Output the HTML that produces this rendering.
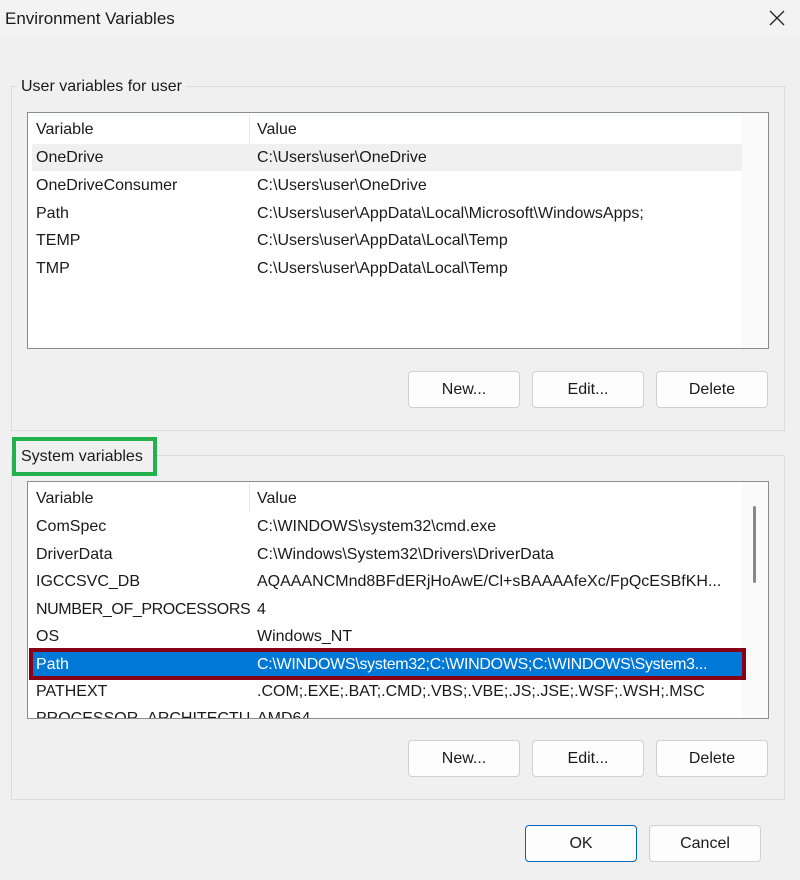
<!DOCTYPE html>
<html><head><style>
*{margin:0;padding:0;box-sizing:border-box}
body{width:800px;height:880px;background:#f0f0f0;font-family:"Liberation Sans",sans-serif;font-size:16px;color:#1a1a1a;position:relative;overflow:hidden}
.abs{position:absolute}
.title{left:0;top:0;width:800px;height:38px;background:#f3f3f3}
.grp{border:1px solid #dcdcdc}
.leg{background:#f0f0f0;padding:0 4px;line-height:20px}
.list{background:#fff;border:1px solid #888d94}
.t{position:absolute;white-space:nowrap;line-height:20px;margin-top:1px}
.btn{position:absolute;background:#fdfdfd;border:1px solid #d0d0d0;border-radius:4px;text-align:center;line-height:36px;height:37px;width:112px}
</style></head><body>
<div class="abs title"></div>
<div class="t" style="left:5px;top:8px;font-size:17px">Environment Variables</div>
<svg class="abs" style="left:768px;top:9px" width="18" height="18"><path d="M2 2L16 16M16 2L2 16" stroke="#222" stroke-width="1.3"/></svg>

<div class="abs grp" style="left:11px;top:86px;width:774px;height:345px"></div>
<div class="abs leg" style="left:17px;top:77px">User variables for user</div>
<div class="abs list" style="left:27px;top:112px;width:742px;height:237px"></div>
<div class="abs" style="left:742px;top:113px;width:26px;height:235px;background:#fafafa"></div>
<div class="abs" style="left:249px;top:115px;width:1px;height:28px;background:#e5e5e5"></div>
<div class="abs" style="left:32px;top:144px;width:710px;height:27px;background:#f0f0f0"></div>
<div class="t" style="left:36px;top:119px">Variable</div><div class="t" style="left:257px;top:119px">Value</div>
<div class="t" style="left:36px;top:147px">OneDrive</div><div class="t" style="left:257px;top:147px">C:\Users\user\OneDrive</div>
<div class="t" style="left:36px;top:175px">OneDriveConsumer</div><div class="t" style="left:257px;top:175px">C:\Users\user\OneDrive</div>
<div class="t" style="left:36px;top:203px">Path</div><div class="t" style="left:257px;top:203px">C:\Users\user\AppData\Local\Microsoft\WindowsApps;</div>
<div class="t" style="left:36px;top:230px">TEMP</div><div class="t" style="left:257px;top:230px">C:\Users\user\AppData\Local\Temp</div>
<div class="t" style="left:36px;top:258px">TMP</div><div class="t" style="left:257px;top:258px">C:\Users\user\AppData\Local\Temp</div>
<div class="btn" style="left:408px;top:371px">New...</div>
<div class="btn" style="left:532px;top:371px">Edit...</div>
<div class="btn" style="left:656px;top:371px">Delete</div>

<div class="abs grp" style="left:11px;top:455px;width:774px;height:345px"></div>
<div class="abs" style="left:12px;top:437px;width:145px;height:39px;border:4px solid #22b14c;background:#f0f0f0"></div>
<div class="t" style="left:21px;top:446px">System variables</div>
<div class="abs list" style="left:27px;top:481px;width:742px;height:238px;overflow:hidden"></div>
<div class="abs" style="left:742px;top:482px;width:26px;height:236px;background:#fafafa"></div>
<div class="abs" style="left:753px;top:506px;width:3px;height:77px;background:#888;border-radius:2px"></div>
<div class="abs" style="left:249px;top:484px;width:1px;height:28px;background:#e5e5e5"></div>
<div class="t" style="left:36px;top:488px">Variable</div><div class="t" style="left:257px;top:488px">Value</div>
<div class="t" style="left:36px;top:516px">ComSpec</div><div class="t" style="left:257px;top:516px">C:\WINDOWS\system32\cmd.exe</div>
<div class="t" style="left:36px;top:544px">DriverData</div><div class="t" style="left:257px;top:544px">C:\Windows\System32\Drivers\DriverData</div>
<div class="t" style="left:36px;top:571px">IGCCSVC_DB</div><div class="t" style="left:257px;top:571px">AQAAANCMnd8BFdERjHoAwE/Cl+sBAAAAfeXc/FpQcESBfKH...</div>
<div class="t" style="left:36px;top:599px;letter-spacing:-0.4px">NUMBER_OF_PROCESSORS</div><div class="t" style="left:257px;top:599px">4</div>
<div class="t" style="left:36px;top:626px">OS</div><div class="t" style="left:257px;top:626px">Windows_NT</div>
<div class="abs" style="left:29px;top:648px;width:717px;height:32px;border:4px solid #880015;background:#0078d7"></div>
<div class="t" style="left:36px;top:654px;color:#fff">Path</div><div class="t" style="left:257px;top:654px;color:#fff;letter-spacing:-0.3px">C:\WINDOWS\system32;C:\WINDOWS;C:\WINDOWS\System3...</div>
<div class="t" style="left:36px;top:681px">PATHEXT</div><div class="t" style="left:257px;top:681px">.COM;.EXE;.BAT;.CMD;.VBS;.VBE;.JS;.JSE;.WSF;.WSH;.MSC</div>
<div class="abs" style="left:28px;top:706px;width:714px;height:12px;overflow:hidden"><div class="t" style="left:8px;top:2px">PROCESSOR_ARCHITECTU</div><div class="t" style="left:229px;top:2px">AMD64</div></div>
<div class="btn" style="left:408px;top:740px">New...</div>
<div class="btn" style="left:532px;top:740px">Edit...</div>
<div class="btn" style="left:656px;top:740px">Delete</div>

<div class="btn" style="left:525px;top:825px;border:1.5px solid #0067c0">OK</div>
<div class="btn" style="left:649px;top:825px">Cancel</div>
</body></html>
